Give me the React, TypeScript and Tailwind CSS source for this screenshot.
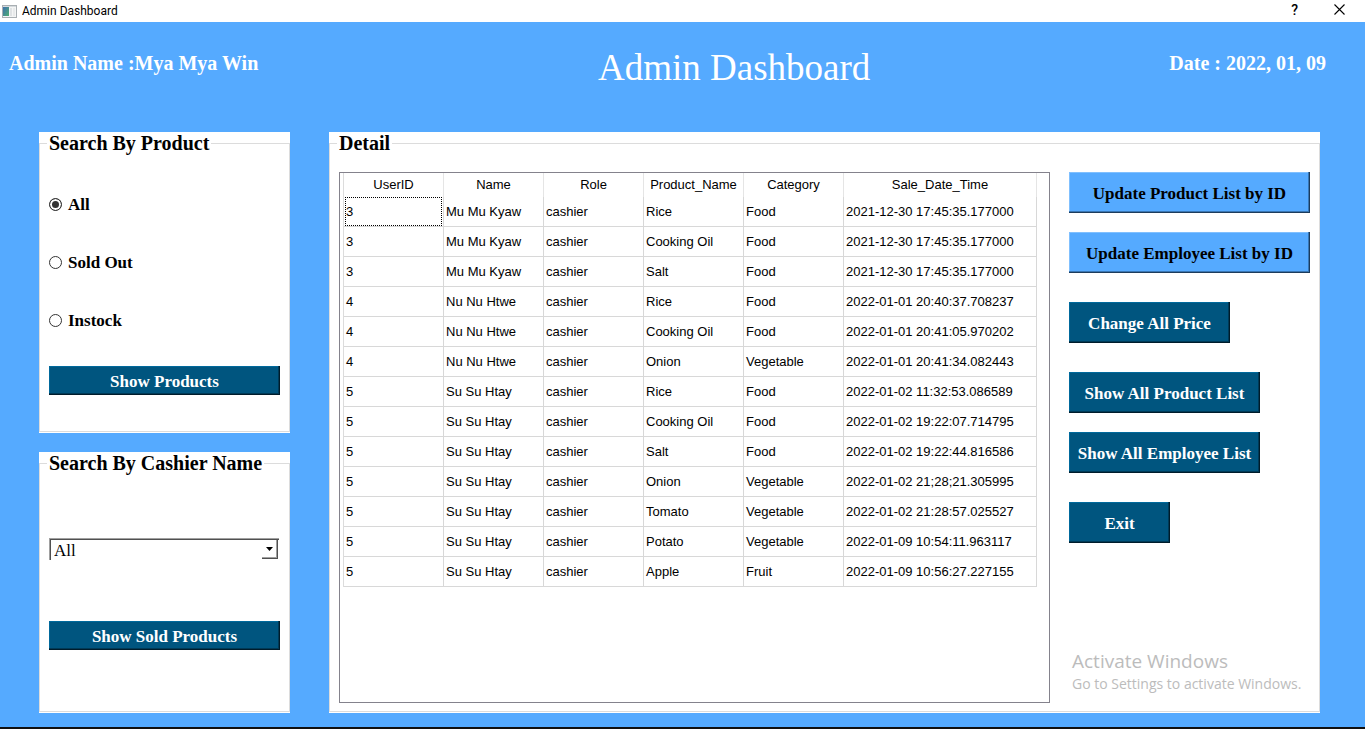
import React from "react";

const columns = ["UserID", "Name", "Role", "Product_Name", "Category", "Sale_Date_Time"];

const rows: string[][] = [
  ["3", "Mu Mu Kyaw", "cashier", "Rice", "Food", "2021-12-30 17:45:35.177000"],
  ["3", "Mu Mu Kyaw", "cashier", "Cooking Oil", "Food", "2021-12-30 17:45:35.177000"],
  ["3", "Mu Mu Kyaw", "cashier", "Salt", "Food", "2021-12-30 17:45:35.177000"],
  ["4", "Nu Nu Htwe", "cashier", "Rice", "Food", "2022-01-01 20:40:37.708237"],
  ["4", "Nu Nu Htwe", "cashier", "Cooking Oil", "Food", "2022-01-01 20:41:05.970202"],
  ["4", "Nu Nu Htwe", "cashier", "Onion", "Vegetable", "2022-01-01 20:41:34.082443"],
  ["5", "Su Su Htay", "cashier", "Rice", "Food", "2022-01-02 11:32:53.086589"],
  ["5", "Su Su Htay", "cashier", "Cooking Oil", "Food", "2022-01-02 19:22:07.714795"],
  ["5", "Su Su Htay", "cashier", "Salt", "Food", "2022-01-02 19:22:44.816586"],
  ["5", "Su Su Htay", "cashier", "Onion", "Vegetable", "2022-01-02 21;28;21.305995"],
  ["5", "Su Su Htay", "cashier", "Tomato", "Vegetable", "2022-01-02 21:28:57.025527"],
  ["5", "Su Su Htay", "cashier", "Potato", "Vegetable", "2022-01-09 10:54:11.963117"],
  ["5", "Su Su Htay", "cashier", "Apple", "Fruit", "2022-01-09 10:56:27.227155"],
];

type ButtonProps = { children: React.ReactNode; light?: boolean; className: string };

function BevelButton({ children, light, className }: ButtonProps) {
  const tone = light
    ? "bg-[#55aaff] text-black shadow-[inset_-1px_-1px_0_#1c3c5c,inset_-2px_-2px_0_#3876b4,inset_1px_1px_0_#80c0ff]"
    : "bg-[#00557f] text-white shadow-[inset_-1px_-1px_0_#001c2b,inset_-2px_-2px_0_#003a57,inset_1px_1px_0_#00699c]";
  return (
    <button type="button" className={`whitespace-nowrap pt-[2px] text-center text-[17px] leading-[20px] font-bold ${tone} ${className}`}>
      {children}
    </button>
  );
}

function Panel({ title, className, children }: { title: string; className: string; children: React.ReactNode }) {
  return (
    <section className={`flex flex-col bg-white pb-px ${className}`}>
      <fieldset className="flex min-w-0 flex-1 flex-col border border-[#dcdcdc] px-[7px]">
        <legend className="px-[2px] text-[20px] leading-[22px] font-bold">{title}</legend>
        {children}
      </fieldset>
    </section>
  );
}

function Choice({ label, defaultChecked }: { label: string; defaultChecked?: boolean }) {
  return (
    <label className="flex h-[18px] items-center gap-[6px] text-[17px] leading-[18px] font-bold">
      <input
        type="radio"
        name="stock"
        defaultChecked={defaultChecked}
        className="size-[13px] appearance-none rounded-full border border-[#333333] bg-white checked:bg-[#333333] checked:shadow-[inset_0_0_0_2px_#ffffff]"
      />
      <span className="pt-[2px]">{label}</span>
    </label>
  );
}

export default function App() {
  return (
    <div className="flex min-h-screen flex-col border-b-2 border-[#101010] bg-[#55aaff] font-['Liberation_Serif',serif] text-black">
      <div className="flex h-[22px] items-center bg-white pl-[2px] font-['Roboto',sans-serif] text-[12px]">
        <svg width="15" height="13" viewBox="0 0 15 13" aria-hidden="true">
          <defs>
            <linearGradient id="pane" x1="0" y1="0" x2="1" y2="1">
              <stop offset="0" stopColor="#3d6fae" />
              <stop offset="1" stopColor="#4fae72" />
            </linearGradient>
          </defs>
          <rect x="0" y="0" width="15" height="13" fill="#a9afb3" />
          <rect x="1" y="1" width="13" height="1" fill="#d5dadd" />
          <rect x="1" y="2" width="13" height="10" fill="#f4f5f5" />
          <rect x="1" y="2" width="6" height="9" fill="url(#pane)" />
          <rect x="8" y="3" width="2" height="8" fill="#dfe2e4" />
          <rect x="11" y="3" width="2" height="8" fill="#e8eaeb" />
        </svg>
        <span className="ml-[5px]">Admin Dashboard</span>
        <button type="button" aria-label="Help" className="mr-[36px] ml-auto pb-[3px] text-[14px] leading-[18px] font-medium">
          ?
        </button>
        <button type="button" aria-label="Close" className="mr-[20px] pb-[4px]">
          <svg width="11" height="11" viewBox="0 0 11 11" aria-hidden="true">
            <path d="M0.5 0.5 L10.5 10.5 M10.5 0.5 L0.5 10.5" stroke="#000" strokeWidth="1.1" />
          </svg>
        </button>
      </div>

      <header className="flex h-[110px] items-start pt-[24px] pr-[39px] pl-[9px] font-bold text-white">
        <p className="w-[589px] pt-[5px] text-[20px] leading-[24px]">Admin Name :Mya Mya Win</p>
        <h1 className="text-[37px] leading-[44px] font-normal">Admin Dashboard</h1>
        <p className="ml-auto pt-[5px] text-[20px] leading-[24px]">Date : 2022, 01, 09</p>
      </header>

      <main className="flex flex-1 gap-[39px] pr-[45px] pb-[14px] pl-[39px]">
        <div className="flex w-[251px] flex-col gap-[19px]">
          <Panel title="Search By Product" className="">
            <div className="flex flex-col px-[2px] pt-[41px] pb-[36px]">
              <div className="flex flex-col gap-[40px]">
                <Choice label="All" defaultChecked />
                <Choice label="Sold Out" />
                <Choice label="Instock" />
              </div>
              <BevelButton className="mt-[37px] h-[29px]">Show Products</BevelButton>
            </div>
          </Panel>
          <Panel title="Search By Cashier Name" className="flex-1">
            <div className="flex flex-col px-[2px] pt-[64px]">
              <div className="relative mr-[1px] h-[22px] border-t border-l border-[#a0a0a0]">
                <div className="h-full border-t border-l border-[#505050]">
                  <select
                    aria-label="Cashier name"
                    className="block h-[20px] w-full appearance-none bg-transparent pt-px pl-[3px] text-[17px] leading-[19px]"
                  >
                    <option>All</option>
                  </select>
                </div>
                <span className="pointer-events-none absolute top-[1px] right-[1px] flex h-[19px] w-[16px] items-center justify-center border-r border-b border-[#505050] bg-white shadow-[inset_-1px_-1px_0_#a0a0a0]">
                  <svg width="7" height="4" viewBox="0 0 7 4" aria-hidden="true">
                    <path d="M0 0 H7 L3.5 4 Z" fill="#000" />
                  </svg>
                </span>
              </div>
              <BevelButton className="mt-[61px] h-[29px]">Show Sold Products</BevelButton>
            </div>
          </Panel>
        </div>

        <Panel title="Detail" className="min-w-0 flex-1">
          <div className="flex flex-1 gap-[19px] px-[2px] pt-[18px] pb-[8px]">
            <div className="min-w-0 flex-1 border border-[#84828c] pr-[12px] pl-[3px] font-['Liberation_Sans',sans-serif] text-[13px]">
              <table className="w-full table-fixed border-separate border-spacing-0 border-l border-[#dcdcdc]">
                <colgroup>
                  <col className="w-[100px]" />
                  <col className="w-[100px]" />
                  <col className="w-[100px]" />
                  <col className="w-[100px]" />
                  <col className="w-[100px]" />
                  <col />
                </colgroup>
                <thead>
                  <tr>
                    {columns.map((name) => (
                      <th key={name} className="h-[24px] border-r border-[#e5e5e5] p-0 text-center leading-[24px] font-normal">
                        {name}
                      </th>
                    ))}
                  </tr>
                </thead>
                <tbody>
                  {rows.map((row, r) => (
                    <tr key={r}>
                      {row.map((value, c) => (
                        <td key={c} className="h-[30px] border-r border-b border-[#d8d8d8] p-0 leading-[27px] whitespace-nowrap">
                          <div
                            className={
                              r === 0 && c === 0
                                ? "mx-px h-[29px] border border-dotted border-black"
                                : "h-[29px] border-y border-transparent pl-[2px]"
                            }
                          >
                            {value}
                          </div>
                        </td>
                      ))}
                    </tr>
                  ))}
                </tbody>
              </table>
            </div>

            <div className="flex w-[241px] flex-col items-start">
              <BevelButton light className="h-[41px] w-full">Update Product List by ID</BevelButton>
              <BevelButton light className="mt-[19px] h-[41px] w-full">Update Employee List by ID</BevelButton>
              <BevelButton className="mt-[29px] h-[41px] w-[161px]">Change All Price</BevelButton>
              <BevelButton className="mt-[29px] h-[41px] w-[191px]">Show All Product List</BevelButton>
              <BevelButton className="mt-[19px] h-[41px] w-[191px]">Show All Employee List</BevelButton>
              <BevelButton className="mt-[29px] h-[41px] w-[101px]">Exit</BevelButton>
              <div className="mt-auto pb-[8px] pl-[3px] font-['Open_Sans',sans-serif] whitespace-nowrap text-[#bcbcbc]">
                <p className="text-[19px] leading-[24px]">Activate Windows</p>
                <p className="text-[14px] leading-[22px]">Go to Settings to activate Windows.</p>
              </div>
            </div>
          </div>
        </Panel>
      </main>
    </div>
  );
}
